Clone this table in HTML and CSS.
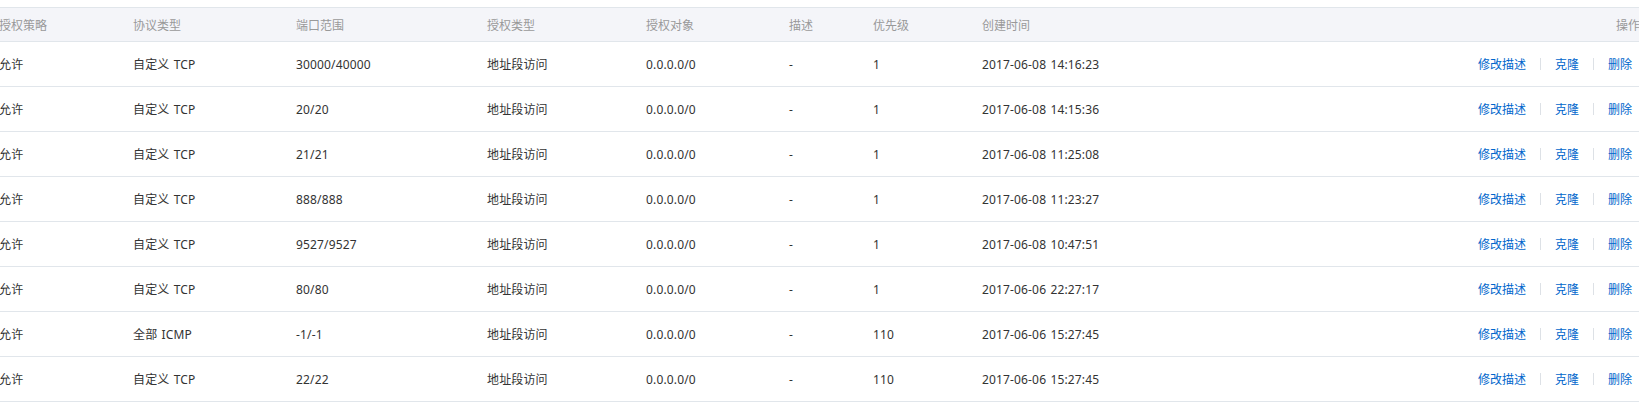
FILE: index.html
```html
<!DOCTYPE html>
<html lang="zh-CN">
<head>
<meta charset="utf-8">
<title>安全组规则</title>
<link rel="stylesheet" href="styles.css">
</head>
<body>
<div class="wrap">
<table class="rules">
  <colgroup>
    <col class="c1"><col class="c2"><col class="c3"><col class="c4"><col class="c5"><col class="c6"><col class="c7"><col class="c8"><col class="c9">
  </colgroup>
  <thead>
    <tr>
      <th>授权策略</th><th>协议类型</th><th>端口范围</th><th>授权类型</th><th>授权对象</th><th>描述</th><th>优先级</th><th>创建时间</th><th class="op-head">操作</th>
    </tr>
  </thead>
  <tbody>
    <tr><td>允许</td><td>自定义 TCP</td><td>30000/40000</td><td>地址段访问</td><td>0.0.0.0/0</td><td>-</td><td>1</td><td>2017-06-08 14:16:23</td><td class="ops"><a class="link">修改描述</a><span class="sep"></span><a class="link">克隆</a><span class="sep"></span><a class="link">删除</a></td></tr>
    <tr><td>允许</td><td>自定义 TCP</td><td>20/20</td><td>地址段访问</td><td>0.0.0.0/0</td><td>-</td><td>1</td><td>2017-06-08 14:15:36</td><td class="ops"><a class="link">修改描述</a><span class="sep"></span><a class="link">克隆</a><span class="sep"></span><a class="link">删除</a></td></tr>
    <tr><td>允许</td><td>自定义 TCP</td><td>21/21</td><td>地址段访问</td><td>0.0.0.0/0</td><td>-</td><td>1</td><td>2017-06-08 11:25:08</td><td class="ops"><a class="link">修改描述</a><span class="sep"></span><a class="link">克隆</a><span class="sep"></span><a class="link">删除</a></td></tr>
    <tr><td>允许</td><td>自定义 TCP</td><td>888/888</td><td>地址段访问</td><td>0.0.0.0/0</td><td>-</td><td>1</td><td>2017-06-08 11:23:27</td><td class="ops"><a class="link">修改描述</a><span class="sep"></span><a class="link">克隆</a><span class="sep"></span><a class="link">删除</a></td></tr>
    <tr><td>允许</td><td>自定义 TCP</td><td>9527/9527</td><td>地址段访问</td><td>0.0.0.0/0</td><td>-</td><td>1</td><td>2017-06-08 10:47:51</td><td class="ops"><a class="link">修改描述</a><span class="sep"></span><a class="link">克隆</a><span class="sep"></span><a class="link">删除</a></td></tr>
    <tr><td>允许</td><td>自定义 TCP</td><td>80/80</td><td>地址段访问</td><td>0.0.0.0/0</td><td>-</td><td>1</td><td>2017-06-06 22:27:17</td><td class="ops"><a class="link">修改描述</a><span class="sep"></span><a class="link">克隆</a><span class="sep"></span><a class="link">删除</a></td></tr>
    <tr><td>允许</td><td>全部 ICMP</td><td>-1/-1</td><td>地址段访问</td><td>0.0.0.0/0</td><td>-</td><td>110</td><td>2017-06-06 15:27:45</td><td class="ops"><a class="link">修改描述</a><span class="sep"></span><a class="link">克隆</a><span class="sep"></span><a class="link">删除</a></td></tr>
    <tr><td>允许</td><td>自定义 TCP</td><td>22/22</td><td>地址段访问</td><td>0.0.0.0/0</td><td>-</td><td>110</td><td>2017-06-06 15:27:45</td><td class="ops"><a class="link">修改描述</a><span class="sep"></span><a class="link">克隆</a><span class="sep"></span><a class="link">删除</a></td></tr>
  </tbody>
</table>
</div>
</body>
</html>
```

FILE: styles.css
```css
html, body {
  margin: 0;
  padding: 0;
  background: #fff;
  overflow: hidden;
}

body {
  font-family: "Noto Sans", "Noto Sans CJK SC", sans-serif;
  font-size: 12px;
  color: #333;
}

.wrap {
  padding-top: 7px;
  margin-left: -1px;
  width: 1641px;
}

.rules {
  width: 100%;
  border-collapse: collapse;
  table-layout: fixed;
}

.c1 { width: 134px; }
.c2 { width: 163px; }
.c3 { width: 191px; }
.c4 { width: 159px; }
.c5 { width: 143px; }
.c6 { width: 84px; }
.c7 { width: 109px; }
.c8 { width: 300px; }

.rules th {
  height: 33px;
  padding: 0;
  text-align: left;
  font-weight: normal;
  color: #999;
  background: #f4f5f9;
  border-top: 1px solid #e1e6eb;
  border-bottom: 1px solid #e1e6eb;
  white-space: nowrap;
}

.rules th.op-head {
  text-align: right;
}

.rules td {
  height: 44px;
  padding: 0;
  border-bottom: 1px solid #e1e6eb;
  white-space: nowrap;
  vertical-align: middle;
  letter-spacing: 0.15px;
  word-spacing: 1px;
}

.rules td.ops {
  text-align: right;
  padding-right: 8px;
  letter-spacing: 0;
  word-spacing: 0;
}

.link {
  color: #0066cc;
  cursor: pointer;
}

.sep {
  display: inline-block;
  width: 1px;
  height: 12px;
  background: #dde1e6;
  margin: 0 14px;
  vertical-align: -1px;
}
```
